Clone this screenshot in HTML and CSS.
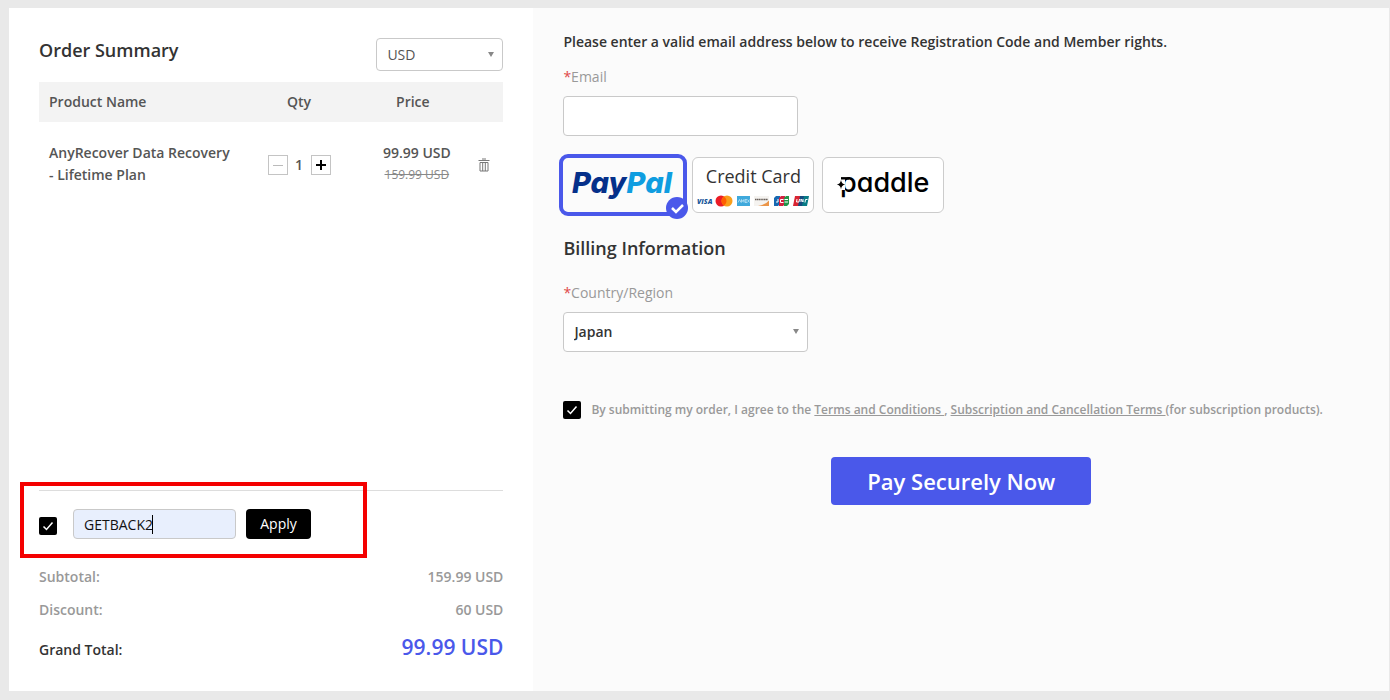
FILE: index.html
```html
<!DOCTYPE html>
<html lang="en">
<head>
<meta charset="utf-8">
<title>Checkout</title>
<link rel="stylesheet" href="styles.css">
</head>
<body>
<main class="checkout">
  <section class="summary">
    <div class="summary-head">
      <h2 class="title">Order Summary</h2>
      <div class="select-wrap currency">
        <select class="select" aria-label="Currency"><option>USD</option></select>
      </div>
    </div>
    <table class="items">
      <thead>
        <tr><th class="col-name">Product Name</th><th class="col-qty">Qty</th><th class="col-price">Price</th><th class="col-del"></th></tr>
      </thead>
      <tbody>
        <tr>
          <td class="col-name">AnyRecover Data Recovery - Lifetime Plan</td>
          <td class="qty-cell">
            <div class="stepper">
              <button type="button" class="step" aria-label="Decrease quantity"><svg width="18" height="18" viewBox="0 0 18 18"><path d="M4 9.500h10" stroke="#bbb" stroke-width="1"/></svg></button>
              <span class="count">1</span>
              <button type="button" class="step" aria-label="Increase quantity"><svg width="18" height="18" viewBox="0 0 18 18"><path d="M4 9h10M9 4v10" stroke="#000" stroke-width="2"/></svg></button>
            </div>
          </td>
          <td class="price-cell"><div class="price">99.99 USD</div><s class="old-price">159.99 USD</s></td>
          <td class="del-cell">
            <button type="button" class="trash" aria-label="Remove item"><svg width="12" height="14" viewBox="0 0 12 14" fill="none" stroke="#777"><path d="M.5 2.500h11M4 1h4M2 4.500v8.500h8V4.500zM4.700 4.500V13M7.300 4.500V13"/></svg></button>
          </td>
        </tr>
      </tbody>
    </table>

    <div class="totals">
      <div class="coupon">
        <input type="checkbox" class="check" checked aria-label="Use coupon">
        <div class="code-wrap">
          <input type="text" class="code" value="GETBACK2" aria-label="Coupon code">
          <span class="caret"></span>
        </div>
        <button type="button" class="apply">Apply</button>
        <span class="highlight"></span>
      </div>
      <div class="total-row"><span>Subtotal:</span><span>159.99 USD</span></div>
      <div class="total-row"><span>Discount:</span><span>60 USD</span></div>
      <div class="grand"><span>Grand Total:</span><strong class="grand-price">99.99 USD</strong></div>
    </div>
  </section>

  <form class="payment">
    <p class="notice">Please enter a valid email address below to receive Registration Code and Member rights.</p>
    <label class="label" for="email"><span class="star">*</span>Email</label>
    <input type="email" id="email" class="email">

    <div class="methods">
      <button type="button" class="method selected" aria-label="PayPal">
        <svg width="112" height="46" viewBox="0 0 112 46"><text x="5" y="31" class="paypal"><tspan fill="#05308a">Pay</tspan><tspan fill="#0f9de0">Pal</tspan></text></svg>
        <svg class="badge" width="22" height="22" viewBox="0 0 22 22"><circle cx="11" cy="11" r="11" fill="#4a58ea"/><path d="M6 11l4 4 7-7" fill="none" stroke="#fff" stroke-width="2.500"/></svg>
      </button>
      <button type="button" class="method card" aria-label="Credit Card">
        <span class="card-name">Credit Card</span>
        <svg width="114" height="12" viewBox="0 0 114 12">
          <text x="1" y="9" class="visa">VISA</text>
          <circle cx="25" cy="6" r="5.500" fill="#eb1c26"/><circle cx="31" cy="6" r="5.500" fill="#f99f1b"/><path d="M28 1.400a5.500 5.500 0 0 1 0 9.200a5.500 5.500 0 0 1 0-9.200" fill="#ff5f00"/>
          <rect x="41" y="1" width="13" height="10" fill="#3fa9dc"/><path d="M42 7.500l1.500-3 1.500 3M45.500 7.500v-3l1.200 2 1.200-2v3M51 4.500h-2v3h2M49 6h2M51.500 4.500l2 3M53.500 4.500l-2 3" fill="none" stroke="#c8e9f8" stroke-width=".7"/>
          <path d="M58 1h15v10H58z" fill="#f5f3f0"/><path d="M73 5.500V11H62q8-1.500 11-5.500" fill="#eb9548"/><path d="M59 4.500h13" stroke="#69615b" stroke-width="1.500" stroke-dasharray="1.400 .4"/>
          <path d="M80 1h4v8l-2 2h-4V3z" fill="#1769b2"/><path d="M85 1h4v8l-2 2h-4V3z" fill="#d3213f"/><path d="M90 1h3v8l-2 2h-3V3z" fill="#22964a"/><path d="M82 4v3h-2M87.500 4.500h-3v3h3M88.500 4.500h3.500M88.500 7h3.500" stroke="#fff" fill="none"/>
          <path d="M99 1h6l-2 10h-6z" fill="#d92432"/><path d="M104 1h5l-2 10h-5z" fill="#164b7f"/><path d="M108 1h5l-2 10h-5z" fill="#087c86"/><path d="M101 4l-.5 3h2.500l.5-3M105 7V4l2 3V4M109 7.500l.5-3h2" fill="none" stroke="#fff"/>
        </svg>
      </button>
      <button type="button" class="method" aria-label="Paddle">
        <svg width="112" height="46" viewBox="0 0 112 46"><text x="13" y="30" class="paddle">paddle</text><path d="M12 14h6v14h-6z" fill="#fff"/><path d="M14 16.300h8" stroke="#000" stroke-width="2.400"/><path d="M14 18q.6 4 4.200 4.600q-3.600.6-4.200 4.600q-.6-4-4.200-4.600q3.600-.6 4.200-4.600z"/></svg>
      </button>
    </div>

    <h2 class="title billing">Billing Information</h2>
    <label class="label" for="country"><span class="star">*</span>Country/Region</label>
    <div class="select-wrap country">
      <select class="select" id="country"><option>Japan</option></select>
    </div>

    <div class="terms">
      <input type="checkbox" class="check" id="agree" checked>
      <label for="agree">By submitting my order, I agree to the <a href="#terms">Terms and Conditions&nbsp;</a>, <a href="#subscription">Subscription and Cancellation Terms&nbsp;</a>(for subscription products).</label>
    </div>
    <button type="button" class="pay">Pay Securely Now</button>
  </form>
</main>
</body>
</html>
```
FILE: styles.css
```css
* { box-sizing: border-box; }
body {
  margin: 0;
  background: #e9e9e9;
  font-family: "Open Sans", "Noto Sans", sans-serif;
  font-size: 14px;
  font-weight: 600;
  line-height: 22px;
  color: #333;
}
button, input, select { font: inherit; color: inherit; margin: 0; }
button { padding: 0; cursor: pointer; }
svg { display: block; }

.checkout {
  display: flex;
  min-height: calc(100vh - 17px);
  margin: 8px 1px 9px 9px;
}
.summary {
  display: flex;
  flex-direction: column;
  width: 38%;
  padding: 30px;
  background: #fff;
}
.summary-head {
  display: flex;
  justify-content: space-between;
  margin-bottom: 11px;
}
.title { margin: 0; font-size: 18px; line-height: 24px; font-weight: 600; }

.select-wrap { position: relative; }
.select-wrap::after {
  content: "";
  position: absolute;
  right: 9px;
  top: 50%;
  margin-top: -3px;
  border: 3px solid transparent;
  border-top: 5px solid #888;
  border-bottom: 0;
  pointer-events: none;
}
.select {
  width: 100%;
  height: 100%;
  padding: 0 10px;
  appearance: none;
  background: #fff;
  border: 1px solid #c9c9c9;
  border-radius: 4px;
}
.currency { width: 127px; height: 33px; color: #555; font-weight: 400; }

.items { width: 100%; table-layout: fixed; border-collapse: collapse; color: #555; }
.items th { height: 40px; padding: 0; background: #f3f3f3; font-weight: 600; }
.items td { padding: 20px 0 0; }
.items .col-name { width: 44%; padding-left: 10px; padding-right: 12px; text-align: left; }
.col-qty { width: 24%; }
.col-price { width: 25%; }
.items .qty-cell, .items .del-cell { padding-top: 22px; }
.stepper { display: flex; justify-content: center; align-items: center; }
.step { width: 20px; height: 20px; background: #fff; border: 1px solid #c4c4c4; }
.count { width: 23px; text-align: center; }
.items .price-cell { padding-left: 8px; text-align: center; }
.old-price { display: block; font-size: 12px; font-weight: 400; color: #888; }
.trash { display: block; margin-left: 7px; background: none; border: 0; }

.totals { margin-top: auto; color: #999; }
.coupon {
  position: relative;
  display: flex;
  align-items: center;
  padding: 18px 0 21px;
  border-top: 1px solid #ddd;
}
.highlight {
  position: absolute;
  left: -19px;
  top: -9px;
  width: 347px;
  height: 76px;
  border: 4px solid #f40000;
  pointer-events: none;
}
.check {
  flex: none;
  width: 18px;
  height: 18px;
  appearance: none;
  border-radius: 2px;
  background: #000 url("data:image/svg+xml,%3Csvg xmlns='http://www.w3.org/2000/svg' viewBox='0 0 18 18'%3E%3Cpath d='M4.500 9.500l3 3 6-7' fill='none' stroke='white' stroke-width='1.500'/%3E%3C/svg%3E") center / 18px;
}
.coupon .check { margin-top: 4px; }
.code-wrap { position: relative; width: 163px; margin: 0 10px 0 16px; }
.code {
  display: block;
  width: 100%;
  height: 30px;
  padding: 0 10px;
  background: #e8effd;
  border: 1px solid #c9c9c9;
  border-radius: 4px;
  color: #111;
  font-weight: 400;
}
.caret { position: absolute; left: 79px; top: 6px; width: 1px; height: 19px; background: #000; }
.apply { width: 65px; height: 30px; background: #000; color: #fff; border: 0; border-radius: 4px; font-weight: 500; }
.total-row { display: flex; justify-content: space-between; align-items: center; height: 33px; }
.grand { display: flex; justify-content: space-between; align-items: baseline; padding-top: 10px; color: #333; }
.grand-price { font-size: 21px; font-weight: 600; color: #4a58ea; }

.payment {
  display: flex;
  flex: 1;
  flex-direction: column;
  align-items: flex-start;
  padding: 23px 30px;
  background: #fbfbfb;
}
.notice { margin: 0 0 13px; }
.label { margin-bottom: 8px; color: #999; font-weight: 400; }
.star { color: #e04848; }
.email {
  width: 235px;
  height: 40px;
  padding: 0 10px;
  background: #fff;
  border: 1px solid #c9c9c9;
  border-radius: 4px;
}
.methods { display: flex; align-items: center; gap: 8px; margin: 18px 0 20px -4px; }
.method {
  position: relative;
  display: flex;
  flex-direction: column;
  align-items: center;
  justify-content: center;
  width: 122px;
  height: 56px;
  background: #fff;
  border: 1px solid #ccc;
  border-radius: 6px;
}
.selected { width: 128px; height: 62px; margin-right: -3px; border: 4px solid #4a58ea; border-radius: 9px; background: #fbfbfb; }
.badge { position: absolute; right: -5px; bottom: -7px; }
.paypal { font: italic 800 29px Inter, sans-serif; font-feature-settings: "cv11"; }
.card { padding-top: 2px; }
.card-name { font-size: 18px; line-height: 22px; margin-bottom: 8px; font-weight: 500; }
.visa { font: italic 800 7px "Open Sans", sans-serif; fill: #17579a; }
.paddle { font: 500 27px Inter, sans-serif; font-feature-settings: "cv11"; }

.billing { margin-bottom: 22px; }
.country { width: 245px; height: 40px; }
.terms {
  display: flex;
  align-items: center;
  gap: 10px;
  margin: 47px 0 36px;
  font-size: 12px;
  color: #999;
}
.terms a { color: inherit; }
.pay {
  align-self: center;
  width: 260px;
  height: 48px;
  background: #4a58ea;
  color: #fff;
  border: 0;
  border-radius: 4px;
  font-size: 22px;
}
```
